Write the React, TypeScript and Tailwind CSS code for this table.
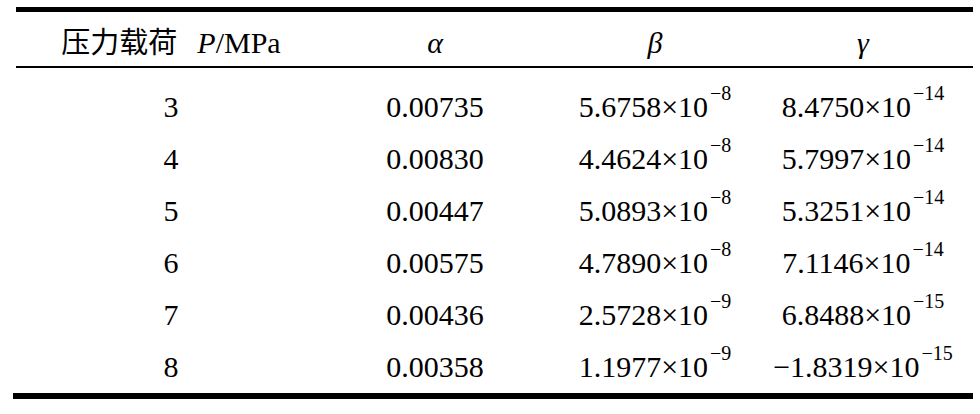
const rows = [
  { p: "3", a: "0.00735", b: ["5.6758", "−8"], g: ["8.4750", "−14"] },
  { p: "4", a: "0.00830", b: ["4.4624", "−8"], g: ["5.7997", "−14"] },
  { p: "5", a: "0.00447", b: ["5.0893", "−8"], g: ["5.3251", "−14"] },
  { p: "6", a: "0.00575", b: ["4.7890", "−8"], g: ["7.1146", "−14"] },
  { p: "7", a: "0.00436", b: ["2.5728", "−9"], g: ["6.8488", "−15"] },
  { p: "8", a: "0.00358", b: ["1.1977", "−9"], g: ["−1.8319", "−15"] },
];

const Sci = ({ v }: { v: string[] }) => (
  <span className="whitespace-nowrap">
    {v[0]}×10
    <sup className="ml-[2px] top-[-17px] text-[20px] leading-none">{v[1]}</sup>
  </span>
);

const App = () => {
  return (
    <div className="w-[980px] h-[414px] bg-white text-black pt-[7px] pl-[13px] font-['Liberation_Serif',serif] text-[30px] leading-none">
      <div className="w-[960px]">
        <div className="ml-[3px] h-[5px] bg-black" />
        <div className="ml-[3px] grid grid-cols-[310px_218px_222px_194px] h-[56px] items-end pb-[8px] border-b-2 border-black">
          <div className="text-center">
            <span className="font-['Noto_Sans_CJK_SC',sans-serif] text-[29px]">压力载荷</span>
            <span className="ml-[20px] italic">P</span>/MPa
          </div>
          <div className="text-center italic">α</div>
          <div className="text-center italic">β</div>
          <div className="text-center italic">γ</div>
        </div>
        <div className="ml-[3px] pt-[13px]">
          {rows.map((r) => (
            <div key={r.p} className="grid grid-cols-[310px_218px_222px_194px] h-[52px] items-center">
              <div className="text-center">{r.p}</div>
              <div className="text-center">{r.a}</div>
              <div className="text-center"><Sci v={r.b} /></div>
              <div className="text-center"><Sci v={r.g} /></div>
            </div>
          ))}
        </div>
        <div className="h-[6px] bg-black" />
      </div>
    </div>
  );
};

export default App;
